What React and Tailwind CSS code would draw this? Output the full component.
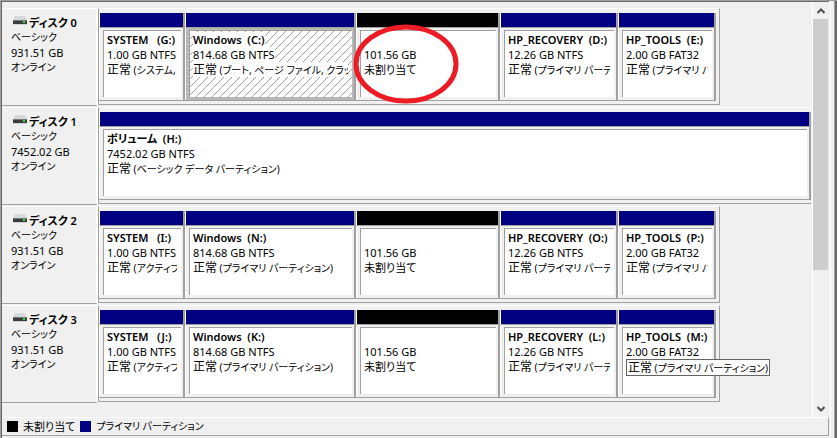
const NAVY = 'bg-[#000080]';

const plain = (size, fs, name, detail, width) => ({ name, size: `${size} ${fs}`, state: '正常', detail, width });

const unallocated = (extra) => ({ name: '', size: '101.56 GB', status: '未割り当て', width: 'w-[144px]', free: true, ...extra });

const disks = [
  {
    label: 'ディスク 0',
    size: '931.51 GB',
    parts: [
      plain('1.00 GB', 'NTFS', 'SYSTEM   (G:)', ' (システム, ', 'w-[86px]'),
      { ...plain('814.68 GB', 'NTFS', 'Windows  (C:)', ' (ブート, ページ ファイル, クラッシュ', 'w-[171px]'), selected: true },
      unallocated({ circled: true }),
      plain('12.26 GB', 'NTFS', 'HP_RECOVERY  (D:)', ' (プライマリ パーティション)', 'w-[118px]'),
      plain('2.00 GB', 'FAT32', 'HP_TOOLS  (E:)', ' (プライマリ パーティション)', 'w-[98px]'),
    ],
  },
  {
    label: 'ディスク 1',
    size: '7452.02 GB',
    full: true,
    parts: [plain('7452.02 GB', 'NTFS', 'ボリューム  (H:)', ' (ベーシック データ パーティション)', 'flex-1')],
  },
  {
    label: 'ディスク 2',
    size: '931.51 GB',
    parts: [
      plain('1.00 GB', 'NTFS', 'SYSTEM   (I:)', ' (アクティブ)', 'w-[86px]'),
      plain('814.68 GB', 'NTFS', 'Windows  (N:)', ' (プライマリ パーティション)', 'w-[171px]'),
      unallocated(),
      plain('12.26 GB', 'NTFS', 'HP_RECOVERY  (O:)', ' (プライマリ パーティション)', 'w-[118px]'),
      plain('2.00 GB', 'FAT32', 'HP_TOOLS  (P:)', ' (プライマリ パーティション)', 'w-[98px]'),
    ],
  },
  {
    label: 'ディスク 3',
    size: '931.51 GB',
    parts: [
      plain('1.00 GB', 'NTFS', 'SYSTEM   (J:)', ' (アクティブ)', 'w-[86px]'),
      plain('814.68 GB', 'NTFS', 'Windows  (K:)', ' (プライマリ パーティション)', 'w-[171px]'),
      unallocated(),
      plain('12.26 GB', 'NTFS', 'HP_RECOVERY  (L:)', ' (プライマリ パーティション)', 'w-[118px]'),
      { ...plain('2.00 GB', 'FAT32', 'HP_TOOLS  (M:)', ' (プライマリ パーティション)', 'w-[98px]'), tooltip: true },
    ],
  },
];

function DiskIcon() {
  return (
    <svg width="14" height="10" viewBox="0 0 14 10" shapeRendering="crispEdges" aria-hidden="true">
      <path d="M2 1h10l2 4H0z" fill="#d6d9dc" />
      <path d="M0 5h14v4H0z" fill="#3a3d3c" />
      <path d="M0 5h14v1H0z" fill="#777b7a" />
      <path d="M0 9h14v1H0z" fill="#d0d3d3" />
      <path d="M10 6h2v2h-2z" fill="#35e04a" />
    </svg>
  );
}

function Hatch() {
  return (
    <svg className="absolute inset-0 h-full w-full" aria-hidden="true">
      <defs>
        <pattern id="hatch" width="8" height="8" patternUnits="userSpaceOnUse">
          <path d="M7 0h1v1h-1zM6 1h1v1h-1zM5 2h1v1h-1zM4 3h1v1h-1zM3 4h1v1h-1zM2 5h1v1h-1zM1 6h1v1h-1zM0 7h1v1h-1z" fill="#a0a0a0" shapeRendering="crispEdges" />
        </pattern>
      </defs>
      <rect width="100%" height="100%" fill="url(#hatch)" />
    </svg>
  );
}

function Status({ part }) {
  if (part.free) return part.status;
  return (
    <>
      <span className="text-[12px]">{part.state}</span>
      <span className="text-[10px]">{part.detail}</span>
    </>
  );
}

function Partition({ part }) {
  return (
    <div className={`relative flex flex-col border-r-2 border-b border-[#a0a0a0] ${part.width}`}>
      <div className={`h-[14px] border-l border-white ${part.free ? 'bg-black' : NAVY}`} />
      <div className={`flex flex-1 border-t border-l border-t-[#a0a0a0] border-l-white pt-[2px] pr-[2px] pb-[3px] pl-[3px] ${part.selected ? 'bg-[#b8b8b8]' : 'bg-[#f0f0f0]'}`}>
        <div className="relative min-w-0 flex-1 border-t border-l border-[#a0a0a0] bg-white pt-px pr-1 pl-[3px]">
          {part.selected && <Hatch />}
          <div className="relative flex flex-col items-start overflow-hidden whitespace-pre">
            <span className="h-[15px] bg-white font-semibold">{part.name}</span>
            <span className="h-[15px] bg-white">{part.size}</span>
            <span className="h-[15px] bg-white"><Status part={part} /></span>
          </div>
        </div>
      </div>
      {part.circled && (
        <svg className="absolute -top-px -left-[3px] z-10" width="108" height="92" viewBox="0 0 108 92" aria-label="highlight">
          <ellipse cx="53" cy="52" rx="50" ry="37" fill="none" stroke="#ed1c24" strokeWidth="5" />
        </svg>
      )}
      {part.tooltip && (
        <div role="tooltip" className="absolute top-[49px] left-2 z-10 h-[17px] border border-[#646464] bg-white pr-px pl-px whitespace-pre">
          <Status part={part} />
        </div>
      )}
    </div>
  );
}

function Disk({ disk }) {
  return (
    <section className="flex h-[98px]">
      <div className="flex w-[96px] shrink-0 flex-col border-t border-r-2 border-b border-t-white border-r-white border-b-[#a0a0a0] pt-[6px] pl-[9px]">
        <h2 className="flex h-[15px] items-start gap-[2px] pl-[2px] font-semibold">
          <DiskIcon />
          {disk.label}
        </h2>
        <p className="h-[15px] text-[10px]">ベーシック</p>
        <p className="h-[15px]">{disk.size}</p>
        <p className="h-[15px] text-[10px]">オンライン</p>
      </div>
      <div className={`mb-px flex min-w-0 border-t border-b border-l border-t-white border-r-[#a0a0a0] border-b-[#a0a0a0] border-l-[#a0a0a0] pt-1 pb-[3px] ${disk.full ? 'mr-px flex-1' : 'border-r pr-[3px]'}`}>
        {disk.parts.map((part) => (
          <Partition key={part.name || 'free'} part={part} />
        ))}
      </div>
    </section>
  );
}

function Scrollbar() {
  return (
    <div className="flex w-[17px] shrink-0 flex-col border-l border-white pr-px">
      <button type="button" aria-label="上へスクロール" className="flex h-[17px] items-center justify-center">
        <svg width="8" height="6" viewBox="0 0 8 6" fill="none" stroke="#505050" strokeWidth="2"><path d="M0.5 5 4 1.5 7.5 5" /></svg>
      </button>
      <div className="flex-1"><div className="h-[66%] bg-[#cdcdcd]" /></div>
      <button type="button" aria-label="下へスクロール" className="flex h-[17px] items-center justify-center">
        <svg width="8" height="6" viewBox="0 0 8 6" fill="none" stroke="#505050" strokeWidth="2"><path d="M0.5 1 4 4.5 7.5 1" /></svg>
      </button>
    </div>
  );
}

export default function App() {
  return (
    <div className="flex min-h-screen border-t border-l border-[#a0a0a0] bg-[#f0f0f0] font-['Noto_Sans','Noto_Sans_CJK_JP',sans-serif] text-[11px] leading-[15px] text-black [font-feature-settings:'palt']">
      <div className="flex min-w-0 flex-1 flex-col border-t border-l border-[#696969]">
        <main className="flex flex-1">
          <div className="flex min-w-0 flex-1 flex-col gap-px pt-[6px]">
            {disks.map((disk) => <Disk key={disk.label} disk={disk} />)}
          </div>
          <Scrollbar />
        </main>
        <footer className="mb-[2px] flex h-[19px] items-center gap-[5px] border-t border-r border-b border-t-white border-r-[#a0a0a0] border-b-[#a0a0a0] pl-[5px]">
          <span className="h-[11px] w-[11px] bg-black" />
          <span>未割り当て</span>
          <span className={`h-[11px] w-[11px] ${NAVY}`} />
          <span className="text-[10px]">プライマリ パーティション</span>
        </footer>
      </div>
      <div className="ml-px w-1 border-l border-white" />
      <div className="w-[3px] border-l border-[#a0a0a0] bg-[#696969]" />
    </div>
  );
}
